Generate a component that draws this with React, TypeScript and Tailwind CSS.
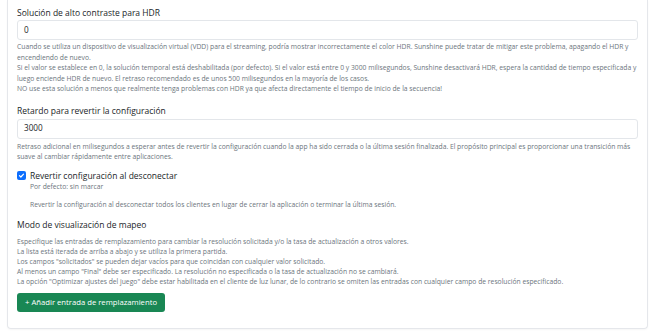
export default function App() {
  return (
    <div className="min-h-[333px] bg-white px-[7px] font-['Open_Sans',sans-serif] text-[#212529]">
      <div className="rounded-b-[4px] border border-t-0 border-[#e5e7eb] px-[9px] pb-[16px] pt-[6px] shadow-[0_1px_2px_rgba(0,0,0,0.04)]">
        {/* HDR */}
        <div>
          <label className="block text-[8.5px] leading-[13px]">Solución de alto contraste para HDR</label>
          <div className="mt-[1px] flex h-[20px] items-center rounded-[3px] border border-[#e3e6ea] px-[6px] text-[8.2px]">0</div>
          <div className="mt-[2px] text-[6.75px] leading-[10.5px] text-[#6c757d]">
            Cuando se utiliza un dispositivo de visualización virtual (VDD) para el streaming, podría mostrar incorrectamente el color HDR. Sunshine puede tratar de mitigar este problema, apagando el HDR y encendiendo de nuevo.
            <br />
            Si el valor se establece en 0, la solución temporal está deshabilitada (por defecto). Si el valor está entre 0 y 3000 milisegundos, Sunshine desactivará HDR, espera la cantidad de tiempo especificada y luego enciende HDR de nuevo. El retraso recomendado es de unos 500 milisegundos en la mayoría de los casos.
            <br />
            NO use esta solución a menos que realmente tenga problemas con HDR ya que afecta directamente el tiempo de inicio de la secuencia!
          </div>
        </div>

        {/* Revert delay */}
        <div className="mt-[9px]">
          <label className="block text-[8.5px] leading-[13px]">Retardo para revertir la configuración</label>
          <div className="mt-[2px] flex h-[20px] items-center rounded-[3px] border border-[#e3e6ea] px-[6px] text-[8.2px]">3000</div>
          <div className="mt-[3px] text-[6.75px] leading-[10.5px] text-[#6c757d]">
            Retraso adicional en milisegundos a esperar antes de revertir la configuración cuando la app ha sido cerrada o la última sesión finalizada. El propósito principal es proporcionar una transición más suave al cambiar rápidamente entre aplicaciones.
          </div>
        </div>

        {/* Checkbox */}
        <div className="mt-[7px]">
          <div className="flex items-center gap-[4px]">
            <span className="flex h-[9px] w-[9px] items-center justify-center rounded-[2px] bg-[#0d6efd]">
              <svg viewBox="0 0 12 12" className="h-[7px] w-[7px]" fill="none" stroke="white" strokeWidth="2" strokeLinecap="round" strokeLinejoin="round">
                <path d="M2.5 6.2l2.4 2.4 4.6-5" />
              </svg>
            </span>
            <span className="text-[8.5px] leading-[12px]">Revertir configuración al desconectar</span>
          </div>
          <div className="pl-[13px] text-[6.75px] leading-[10px] text-[#6c757d]">Por defecto: sin marcar</div>
          <div className="mt-[8px] pl-[13px] text-[6.75px] leading-[10px] text-[#6c757d]">
            Revertir la configuración al desconectar todos los clientes en lugar de cerrar la aplicación o terminar la última sesión.
          </div>
        </div>

        {/* Mapping */}
        <div className="mt-[8px]">
          <label className="block text-[8.5px] leading-[13px]">Modo de visualización de mapeo</label>
          <div className="mt-[6px] text-[6.75px] leading-[10px] text-[#6c757d]">
            Especifique las entradas de remplazamiento para cambiar la resolución solicitada y/o la tasa de actualización a otros valores.
            <br />
            La lista está iterada de arriba a abajo y se utiliza la primera partida.
            <br />
            Los campos "solicitados" se pueden dejar vacíos para que coincidan con cualquier valor solicitado.
            <br />
            Al menos un campo "Final" debe ser especificado. La resolución no especificada o la tasa de actualización no se cambiará.
            <br />
            La opción "Optimizar ajustes del juego" debe estar habilitada en el cliente de luz lunar, de lo contrario se omiten las entradas con cualquier campo de resolución especificado.
          </div>
          <button className="mt-[6px] h-[19px] rounded-[3px] bg-[#198754] px-[8px] text-[7.7px] text-white">
            + Añadir entrada de remplazamiento
          </button>
        </div>
      </div>
    </div>
  )
}
